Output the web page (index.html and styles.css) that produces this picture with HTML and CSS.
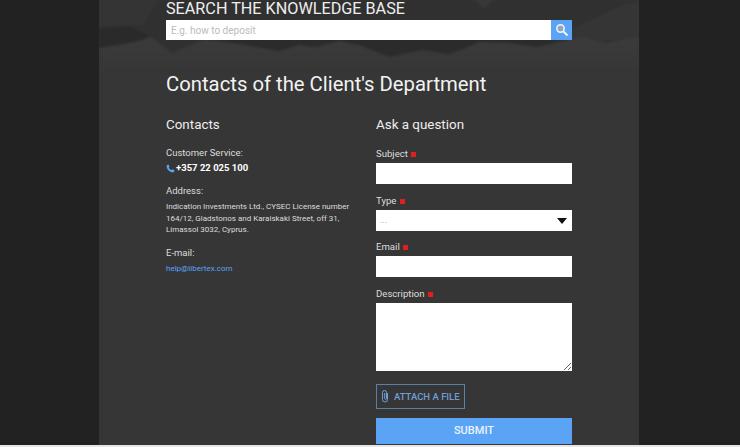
FILE: index.html
```html
<!DOCTYPE html>
<html lang="en">

<head>
  <meta charset="UTF-8">
  <meta name="viewport" content="width=device-width, initial-scale=1.0">
  <title>Contacts of the Client's Department</title>
  <link rel="stylesheet" href="styles.css">
</head>

<body>

  <div class="page">
    <div class="container">
      <svg class="mountains" viewBox="0 0 540 72" preserveAspectRatio="none">
        <defs>
          <linearGradient id="ground" x1="0" y1="0" x2="0" y2="1">
            <stop offset="0" stop-color="#3b3b3b"/>
            <stop offset="1" stop-color="#363636"/>
          </linearGradient>
        </defs>
        <rect width="540" height="72" fill="#303030"/>
        <path fill="#343434" d="M0 0H60L45 24 30 26 0 28Z"/>
        <path fill="#2a2a2a" d="M0 28L30 26 50 36 36 44 0 50Z"/>
        <path fill="#2b2b2b" d="M120 40L210 30 300 28 380 32 470 20 475 50 400 56 280 60 180 56Z"/>
        <path fill="#353535" d="M470 30L500 16 525 4 540 2V40H470Z"/>
        <path fill="#383838" d="M375 0L385 8 395 0Z"/>
        <path fill="url(#ground)" d="M0 48L36 42 52 37 73 53 105 40 140 44 180 51 200 45 217 47 240 41 263 46 290 57 323 50 350 54 362 50 380 42 410 43 437 47 483 37 507 43 537 37 540 37V72H0Z"/>
      </svg>

      <section class="search">
        <h2>SEARCH THE KNOWLEDGE BASE</h2>
        <form class="search-form">
          <input type="text" placeholder="E.g. how to deposit">
          <button type="button" class="search-btn" aria-label="Search">
            <svg width="14" height="14" viewBox="0 0 14 14">
              <circle cx="5.500" cy="5.500" r="3.700" fill="#8fa6c4" stroke="#f2f7ff" stroke-width="1.500"/>
              <path d="M8.500 8.500L12.500 12.500" stroke="#f2f7ff" stroke-width="2"/>
            </svg>
          </button>
        </form>
      </section>

      <h1>Contacts of the Client's Department</h1>

      <div class="columns">
        <div class="contacts">
          <h3>Contacts</h3>
          <p class="label">Customer Service:</p>
          <p class="phone">
            <svg width="9" height="9" viewBox="0 0 24 24">
              <path fill="#5ba4f5" d="M6.600 1L2 3.500C1 9 3.500 14 7 17.500S15 23 20.500 22l2.500-4.600-6-3.500-2.600 2.400c-2.500-1-6.200-4.700-7.200-7.200L9.500 7z"/>
            </svg>
            +357 22 025 100
          </p>
          <p class="label">Address:</p>
          <p class="address">Indication Investments Ltd., CYSEC License number 164/12, Gladstonos and Karaiskaki Street, off 31, Limassol 3032, Cyprus.</p>
          <p class="label">E-mail:</p>
          <a class="mail" href="#">help@libertex.com</a>
        </div>

        <form class="question">
          <h3>Ask a question</h3>
          <div class="form-group">
            <label for="subject">Subject <i class="req"></i></label>
            <input type="text" id="subject">
          </div>
          <div class="form-group">
            <label for="type">Type <i class="req"></i></label>
            <div class="select-box">
              <select id="type">
                <option>...</option>
              </select>
            </div>
          </div>
          <div class="form-group">
            <label for="email">Email <i class="req"></i></label>
            <input type="text" id="email">
          </div>
          <div class="form-group">
            <label for="description">Description <i class="req"></i></label>
            <textarea id="description"></textarea>
          </div>
          <button type="button" class="attach">
            <svg width="8" height="14" viewBox="0 0 8 14">
              <path fill="none" stroke="#6e9fd8" stroke-width="1" d="M6.500 4V10.500a2.500 2.500 0 0 1-5 0V3.500a2 2 0 0 1 4 0V9.500a.9.9 0 0 1-1.800 0V4"/>
            </svg>
            ATTACH A FILE
          </button>
          <button type="button" class="submit">SUBMIT</button>
        </form>
      </div>
    </div>
  </div>

</body>

</html>
```

FILE: styles.css
```css
body {
  font-family: Roboto, Arial, sans-serif;
  margin: 0;
  padding: 0;
  background-color: #222;
  overflow: hidden;
}

.page {
  height: 445px;
  overflow: hidden;
  border-bottom: 2px solid #e6e6e6;
}

.container {
  position: relative;
  width: 540px;
  height: 100%;
  margin-left: 99px;
  padding: 0 67px;
  box-sizing: border-box;
  background-color: #363636;
  color: #eee;
  overflow: hidden;
}

.mountains {
  position: absolute;
  top: 0;
  left: 0;
  width: 100%;
  height: 72px;
  filter: blur(1px);
}

.search {
  position: relative;
}

.search h2 {
  margin: 0;
  padding-top: 1px;
  font-size: 16.2px;
  font-weight: 400;
  line-height: 16px;
  color: #eee;
  white-space: nowrap;
}

.search-form {
  display: flex;
  width: 406px;
  height: 20px;
  margin-top: 3px;
}

.search-form input {
  flex: 1;
  min-width: 0;
  border: none;
  padding: 0 5px;
  font-family: inherit;
  font-size: 10px;
  background-color: white;
  outline: none;
}

.search-form input::placeholder {
  color: #bbb;
}

.search-btn {
  width: 21px;
  padding: 0;
  border: none;
  background-color: #5ba4f5;
  display: flex;
  align-items: center;
  justify-content: center;
}

h1 {
  position: relative;
  margin: 30px 0 0;
  font-size: 20.3px;
  font-weight: 400;
  line-height: 28px;
  color: #f2f2f2;
}

.columns {
  display: flex;
  margin-top: 18px;
}

.contacts {
  width: 210px;
  padding-right: 14px;
  box-sizing: border-box;
}

.question {
  width: 196px;
}

h3 {
  margin: 0;
  font-size: 13.4px;
  font-weight: 400;
  line-height: 18px;
  color: #eee;
}

.contacts p {
  margin: 0;
}

.contacts h3 {
  margin-bottom: 12px;
}

.label {
  font-size: 9.5px;
  line-height: 14px;
  color: #ddd;
}

.contacts .phone {
  display: flex;
  align-items: center;
  gap: 1px;
  margin-top: 1px;
  margin-bottom: 9px;
  font-size: 9.5px;
  font-weight: 700;
  line-height: 14px;
  color: #fff;
}

.contacts .address {
  margin-top: 3px;
  margin-bottom: 10px;
  font-size: 8px;
  line-height: 11.5px;
  color: #ddd;
}

.mail {
  display: block;
  margin-top: 3px;
  font-size: 8px;
  line-height: 12px;
  color: #5ba4f5;
  text-decoration: none;
}

.question h3 {
  margin-bottom: 13px;
}

.form-group {
  margin-bottom: 9.5px;
}

.form-group label {
  display: block;
  margin-bottom: 2px;
  font-size: 9.6px;
  line-height: 14px;
  color: #ddd;
}

.req {
  display: inline-block;
  width: 5px;
  height: 5px;
  margin-left: 1px;
  background-color: #e02020;
}

.form-group input,
.form-group textarea {
  display: block;
  width: 100%;
  box-sizing: border-box;
  height: 21px;
  border: none;
  background-color: white;
  outline: none;
  margin: 0;
}

.form-group textarea {
  height: 68px;
  resize: vertical;
}

.select-box {
  position: relative;
}

.select-box::after {
  content: "";
  position: absolute;
  top: 8px;
  right: 5px;
  border-left: 5px solid transparent;
  border-right: 5px solid transparent;
  border-top: 6px solid #111;
}

.form-group select {
  display: block;
  width: 100%;
  height: 21px;
  padding: 0 4px;
  border: none;
  border-radius: 0;
  background-color: white;
  color: #999;
  font-family: inherit;
  font-size: 9px;
  appearance: none;
}

.attach {
  display: flex;
  align-items: center;
  gap: 5px;
  width: 89px;
  height: 25px;
  margin-top: 13px;
  padding: 0 0 0 4px;
  box-sizing: border-box;
  background: none;
  border: 1px solid #5b7fa8;
  color: #6e9fd8;
  font-family: inherit;
  font-size: 9.5px;
  font-weight: 500;
  white-space: nowrap;
}

.submit {
  display: block;
  width: 100%;
  height: 26px;
  margin-top: 9px;
  border: none;
  background-color: #5ba4f5;
  color: #eaf3ff;
  font-family: inherit;
  font-size: 11px;
  font-weight: 500;
}
```
